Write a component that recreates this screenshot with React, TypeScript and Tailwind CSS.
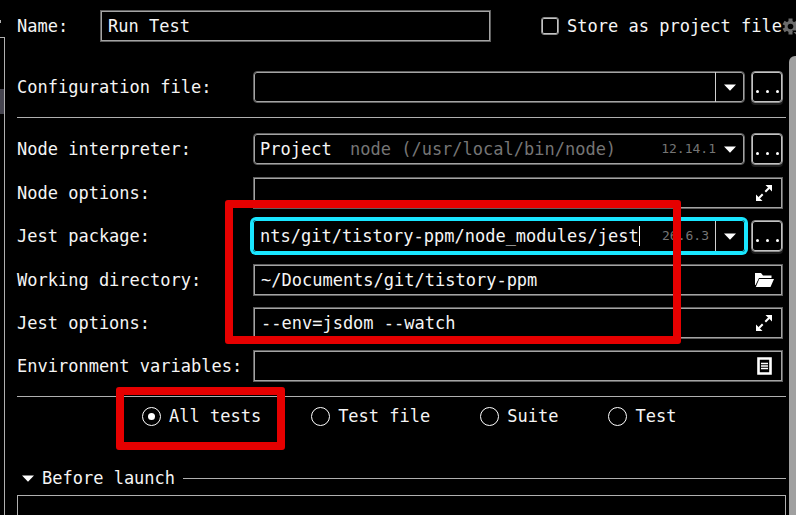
import { useState } from 'react';
import type { ReactNode } from 'react';

function Caret() {
  return (
    <svg className="h-[7px] w-[12px] shrink-0" viewBox="0 0 12 7" aria-hidden="true">
      <path d="M0 0.5h12L6 6.8z" fill="#fff" />
    </svg>
  );
}

function ExpandIcon() {
  return (
    <svg className="size-4" viewBox="0 0 16 16" fill="#fff" stroke="#fff" aria-hidden="true">
      <path d="M9.5 0H16V6.5zM0 9.5V16h6.5z" stroke="none" />
      <path d="M13 3L9.3 6.7M3 13l3.7-3.7" strokeWidth="2" />
    </svg>
  );
}

function FolderIcon() {
  return (
    <svg className="h-4 w-5" viewBox="0 0 20 16" fill="#fff" aria-hidden="true">
      <path d="M1 1h6l2 2.5h8.5V6H5L1.5 13H1z" />
      <path d="M5.2 7H20l-3.5 8H1.8z" />
    </svg>
  );
}

function ListIcon() {
  return (
    <svg className="h-[18px] w-[15px]" viewBox="0 0 15 18" fill="none" stroke="#fff" aria-hidden="true">
      <path d="M1.5 1.5h12v15h-12z" strokeWidth="2.6" />
      <path d="M4 6.5h7M4 9h7M4 11.5h7" strokeWidth="1.3" />
    </svg>
  );
}

function GearIcon() {
  return (
    <svg className="h-[17px] w-[17px]" viewBox="0 0 17 17" aria-hidden="true">
      <g fill="#6b6b6b">
        <path d="M6.5 0.5h4v16h-4z" />
        <path d="M6.5 0.5h4v16h-4z" transform="rotate(60 8.5 8.5)" />
        <path d="M6.5 0.5h4v16h-4z" transform="rotate(120 8.5 8.5)" />
        <circle cx="8.5" cy="8.5" r="5.8" />
      </g>
      <circle cx="8.5" cy="8.5" r="2.8" fill="#000" />
      <path d="M10 12.5h7V17h-3z" fill="#000" />
      <path d="M11.5 14H17v3h-2.5z" fill="#6b6b6b" />
    </svg>
  );
}

function Row({ id, label, children }: { id: string; label: string; children: ReactNode }) {
  return (
    <div className="flex items-start">
      <label htmlFor={id} className="w-[236px] shrink-0 leading-8">
        {label}
      </label>
      {children}
    </div>
  );
}

function MoreButton({ label }: { label: string }) {
  return (
    <button
      type="button"
      aria-label={label}
      className="mb-px flex h-8 w-8 shrink-0 items-end justify-center gap-[7px] rounded-[4px] border border-[#8c8c8c] pb-[9px] inset-ring inset-ring-[#c4c4c4] shadow-[0_2px_0_#1c1c1c]"
    >
      <span className="size-[3px] rounded-full bg-white" />
      <span className="size-[3px] rounded-full bg-white" />
      <span className="size-[3px] rounded-full bg-white" />
    </button>
  );
}

function TextField({ id, value, icon, iconLabel }: { id: string; value: string; icon: ReactNode; iconLabel: string }) {
  return (
    <div className="flex h-8 min-w-0 flex-1 items-center border border-[#5f5f5f] pr-2 inset-ring inset-ring-[#a4a4a4]">
      <input id={id} type="text" defaultValue={value} className="h-full min-w-0 flex-1 bg-transparent px-[7px] outline-none" />
      <button type="button" aria-label={iconLabel} className="flex w-5 justify-center">
        {icon}
      </button>
    </div>
  );
}

const kinds = ['All tests', 'Test file', 'Suite', 'Test'];

export default function App() {
  const [kind, setKind] = useState('All tests');

  return (
    <div className="flex h-screen overflow-hidden bg-black font-['DejaVu_Sans_Mono','Liberation_Mono',monospace] text-[17px] leading-6 text-[#f5f5f5]">
      <aside className="flex w-[5px] shrink-0 flex-col pt-5">
        <span className="h-[3px] w-px bg-[#b0b0b0]" />
        <div className="mt-[14px] flex-1 border-t border-r border-[#b0b0b0] pt-[51px]">
          <div className="h-[25px] bg-[#45444f]" />
        </div>
      </aside>

      <main className="flex min-w-0 flex-1 flex-col pl-3">
        <div className="flex h-[51px] items-start pt-[10px]">
          <label htmlFor="name" className="w-[83px] shrink-0 leading-8">
            Name:
          </label>
          <input
            id="name"
            type="text"
            defaultValue="Run Test"
            className="h-8 min-w-0 flex-1 border border-[#5f5f5f] bg-transparent px-[7px] inset-ring inset-ring-[#a4a4a4] outline-none"
          />
          <label className="ml-[50px] flex h-8 shrink-0 items-center gap-2 whitespace-nowrap">
            <input type="checkbox" className="size-[18px] appearance-none rounded-[3px] border border-[#8c8c8c] inset-ring inset-ring-[#c4c4c4] checked:bg-white" />
            Store as project file
          </label>
          <button type="button" aria-label="Storage settings" className="-mr-[3px] flex h-8 shrink-0 items-center">
            <GearIcon />
          </button>
        </div>

        <div className="flex min-h-0 flex-1">
          <form className="flex min-w-0 flex-1 flex-col pt-5 pr-[3px]">
            <div className="pr-[3px]">
              <Row id="config" label="Configuration file:">
                <div className="mr-[6px] flex h-8 min-w-0 flex-1 rounded-[4px] border border-[#5f5f5f] inset-ring inset-ring-[#a4a4a4]">
                  <input id="config" type="text" className="min-w-0 flex-1 bg-transparent px-[6px] outline-none" />
                  <button type="button" aria-label="Show configuration files" className="flex w-[29px] items-center justify-center border-l border-[#d0d0d0]">
                    <Caret />
                  </button>
                </div>
                <MoreButton label="Browse configuration files" />
              </Row>
            </div>

            <hr className="mt-[13px] border-[#b0b0b0]" />

            <div className="relative mt-[15px] flex flex-col gap-[11px] pr-[3px]">
              <Row id="interpreter" label="Node interpreter:">
                <div className="mr-[6px] grid h-8 min-w-0 flex-1 grid-cols-1 rounded-[4px] border border-[#5f5f5f] inset-ring inset-ring-[#a4a4a4]">
                  <select id="interpreter" className="col-start-1 row-start-1 appearance-none bg-transparent px-[6px] outline-none">
                    <option>Project</option>
                  </select>
                  <div className="pointer-events-none col-start-1 row-start-1 flex items-center pr-2 pl-24 text-[#757575]">
                    <span className="flex-1 whitespace-nowrap">node (/usr/local/bin/node)</span>
                    <span className="mr-2 text-[13px]">12.14.1</span>
                    <Caret />
                  </div>
                </div>
                <MoreButton label="Browse interpreters" />
              </Row>
              <Row id="nodeOptions" label="Node options:">
                <TextField id="nodeOptions" value="" icon={<ExpandIcon />} iconLabel="Expand node options" />
              </Row>
              <Row id="jestPackage" label="Jest package:">
                <div className="mr-[6px] flex h-8 min-w-0 flex-1 items-center rounded-[3px] border border-[#19e6ff] ring-[3px] ring-[#19e6ff]">
                  <input
                    id="jestPackage"
                    type="text"
                    defaultValue="nts/git/tistory-ppm/node_modules/jest"
                    className="h-full [field-sizing:content] bg-transparent pl-[6px] outline-none"
                  />
                  <span className="h-5 w-px bg-white" />
                  <span className="flex-1 pr-[6px] text-right text-[13px] text-[#757575]">26.6.3</span>
                  <button type="button" aria-label="Show Jest packages" className="flex h-full w-[29px] items-center justify-center border-l border-[#d0d0d0]">
                    <Caret />
                  </button>
                </div>
                <MoreButton label="Browse Jest packages" />
              </Row>
              <Row id="workingDir" label="Working directory:">
                <TextField id="workingDir" value="~/Documents/git/tistory-ppm" icon={<FolderIcon />} iconLabel="Choose directory" />
              </Row>
              <Row id="jestOptions" label="Jest options:">
                <TextField id="jestOptions" value="--env=jsdom --watch" icon={<ExpandIcon />} iconLabel="Expand Jest options" />
              </Row>
              <Row id="env" label="Environment variables:">
                <TextField id="env" value="" icon={<ListIcon />} iconLabel="Edit environment variables" />
              </Row>
              <div className="pointer-events-none absolute top-[67px] right-[105px] bottom-[38px] left-[208px] rounded-[3px] border-8 border-[#e60000]" />
            </div>

            <hr className="mt-[14px] border-[#b0b0b0]" />

            <div role="radiogroup" aria-label="Tests to run" className="flex gap-[50px] pt-[7px] pl-[125px]">
              {kinds.map((name) => (
                <label key={name} className="relative flex items-center gap-2 whitespace-nowrap">
                  <input
                    type="radio"
                    name="kind"
                    checked={kind === name}
                    onChange={() => setKind(name)}
                    className="flex size-[19px] appearance-none items-center justify-center rounded-full border border-white checked:before:size-[7px] checked:before:rounded-full checked:before:bg-white"
                  />
                  {name}
                  {name === 'All tests' && (
                    <span className="pointer-events-none absolute -top-[17px] -right-6 -bottom-[22px] -left-[26px] rounded-[3px] border-8 border-[#e60000]" />
                  )}
                </label>
              ))}
            </div>

            <section className="mt-[38px] flex min-h-0 flex-1 flex-col">
              <button type="button" aria-expanded="true" className="flex items-center pl-[5px]">
                <Caret />
                <span className="ml-2">Before launch</span>
                <span className="ml-2 h-px flex-1 bg-[#b0b0b0]" />
              </button>
              <div className="mt-[5px] flex-1 border border-b-0 border-[#b0b0b0]" />
            </section>
          </form>
          <div className="mt-[5px] w-[7px] shrink-0 rounded-tl-[6px] bg-[#a0a0a0]" />
        </div>
      </main>
    </div>
  );
}
